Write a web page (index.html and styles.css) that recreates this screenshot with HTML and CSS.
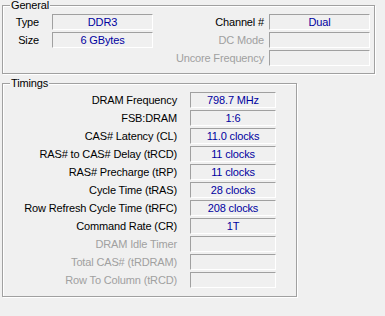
FILE: index.html
```html
<!DOCTYPE html>
<html>
<head>
<meta charset="utf-8">
<link rel="stylesheet" href="styles.css">
</head>
<body>
<div class="page">
  <div class="group general">
    <span class="group-title">General</span>
    <div class="general-body">
      <div class="col col-left">
        <span class="label">Type</span><span class="field">DDR3</span>
        <span class="label">Size</span><span class="field">6 GBytes</span>
      </div>
      <div class="col col-right">
        <span class="label">Channel #</span><span class="field">Dual</span>
        <span class="label disabled">DC Mode</span><span class="field"></span>
        <span class="label disabled">Uncore Frequency</span><span class="field"></span>
      </div>
    </div>
  </div>
  <div class="group timings">
    <span class="group-title">Timings</span>
    <div class="timings-body">
      <span class="label">DRAM Frequency</span><span class="field">798.7 MHz</span>
      <span class="label">FSB:DRAM</span><span class="field">1:6</span>
      <span class="label">CAS# Latency (CL)</span><span class="field">11.0 clocks</span>
      <span class="label">RAS# to CAS# Delay (tRCD)</span><span class="field">11 clocks</span>
      <span class="label">RAS# Precharge (tRP)</span><span class="field">11 clocks</span>
      <span class="label">Cycle Time (tRAS)</span><span class="field">28 clocks</span>
      <span class="label">Row Refresh Cycle Time (tRFC)</span><span class="field">208 clocks</span>
      <span class="label">Command Rate (CR)</span><span class="field">1T</span>
      <span class="label disabled">DRAM Idle Timer</span><span class="field"></span>
      <span class="label disabled">Total CAS# (tRDRAM)</span><span class="field"></span>
      <span class="label disabled">Row To Column (tRCD)</span><span class="field"></span>
    </div>
  </div>
</div>
</body>
</html>
```
FILE: styles.css
```css
html, body {
  margin: 0;
  padding: 0;
  background: #f0f0f0;
}
body {
  width: 385px;
  height: 316px;
  overflow: hidden;
  font-family: "Liberation Sans", Arial, sans-serif;
  font-size: 11px;
  letter-spacing: -0.15px;
  color: #000;
}
.page {
  padding: 5px 0 0 2px;
}
.group {
  position: relative;
  box-sizing: border-box;
  border: 1px solid #a0a0a0;
  box-shadow: inset 1px 1px #fff, 1px 1px #fff;
}
.group-title {
  position: absolute;
  top: -7px;
  left: 7px;
  padding: 0 1px;
  line-height: 13px;
  background: #f0f0f0;
}
.general {
  width: 373px;
  height: 69px;
}
.general-body {
  display: flex;
  justify-content: space-between;
  align-items: flex-start;
  padding: 8px 4px 0 0;
}
.col {
  display: grid;
  row-gap: 2px;
  align-items: center;
  align-content: start;
}
.col-left {
  grid-template-columns: 36px 101px;
  column-gap: 13px;
}
.col-right {
  grid-template-columns: auto 101px;
  column-gap: 5px;
}
.label {
  text-align: right;
  white-space: nowrap;
  line-height: 16px;
}
.label.disabled {
  color: #a0a0a0;
}
.field {
  box-sizing: border-box;
  height: 16px;
  line-height: 14px;
  text-align: center;
  color: #0000a0;
  border-top: 1px solid #a0a0a0;
  border-left: 1px solid #a0a0a0;
  border-right: 1px solid #fff;
  border-bottom: 1px solid #fff;
  white-space: nowrap;
}
.timings {
  margin-top: 9px;
  width: 295px;
  height: 214px;
}
.timings-body {
  display: grid;
  grid-template-columns: 174px 86px;
  column-gap: 13px;
  row-gap: 2px;
  align-items: center;
  padding: 8px 0 0 0;
}
```
